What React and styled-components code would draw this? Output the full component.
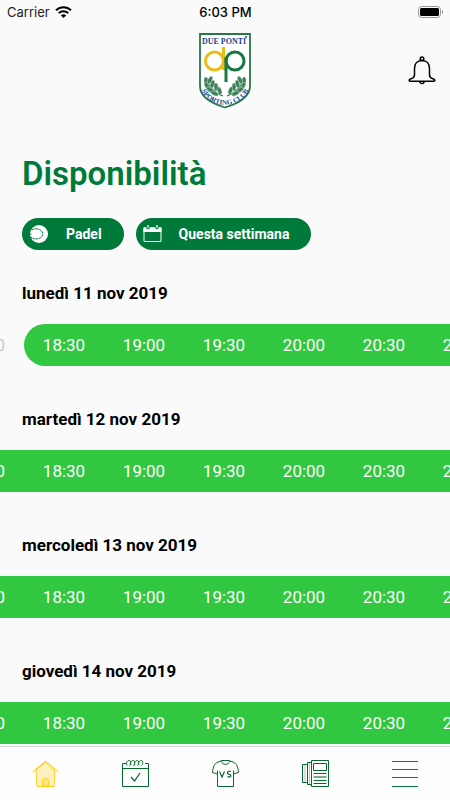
import React from "react";
import styled, { createGlobalStyle, css } from "styled-components";

const GlobalStyle = createGlobalStyle`
  *, *::before, *::after { box-sizing: border-box; }
  body {
    margin: 0;
    background: #fafafa;
    color: #000;
    font-family: Roboto, "Liberation Sans", sans-serif;
  }
  button { font: inherit; border: 0; padding: 0; cursor: pointer; }
`;

const Screen = styled.div`
  display: flex;
  flex-direction: column;
  height: 100vh;
  overflow: hidden;
`;

const StatusBar = styled.div`
  display: grid;
  grid-template-columns: 1fr auto 1fr;
  align-items: center;
  flex: none;
  height: 24px;
  padding: 0 6px 0 7px;
  font-family: Inter, "Liberation Sans", sans-serif;
  font-size: 13px;
`;

const Carrier = styled.span`
  display: flex;
  align-items: center;
  gap: 5px;
  color: #222;
`;

const Clock = styled.time`
  font-weight: 500;
`;

const BatteryIcon = styled.svg`
  justify-self: end;
`;

const Header = styled.header`
  display: grid;
  grid-template-columns: 1fr auto 1fr;
  flex: none;
  height: 126px;
  padding: 8px 14px 0;
`;

const Crest = styled.svg`
  grid-column: 2;
  display: block;
`;

const BellButton = styled.button`
  justify-self: end;
  align-self: start;
  margin-top: 24px;
  background: none;
  svg { display: block; }
`;

const Content = styled.main`
  flex: 1;
  min-height: 0;
  overflow-y: auto;
  overflow-x: hidden;
  scrollbar-width: none;
`;

const Title = styled.h1`
  margin: 0;
  padding: 0 22px;
  color: #007a3b;
  font-size: 33px;
  line-height: 48px;
  font-weight: 600;
`;

const Filters = styled.div`
  display: flex;
  gap: 12px;
  padding: 20px 22px 30px;
`;

const FilterButton = styled.button`
  display: flex;
  align-items: center;
  gap: 17px;
  height: 32px;
  padding: 0 22px 0 7px;
  border-radius: 16px;
  background: #007a3b;
  color: #fff;
  font-size: 14px;
  font-weight: 700;
  svg { display: block; }
`;

const Day = styled.section`
  padding-bottom: 40px;
`;

const DayTitle = styled.h2`
  margin: 0;
  padding: 0 22px 18px;
  font-size: 17px;
  line-height: 26px;
  font-weight: 700;
`;

const SlotTrack = styled.div`
  display: flex;
  margin-left: -56px;
  overflow: hidden;
`;

const Slot = styled.button`
  flex: none;
  width: 80px;
  height: 42px;
  font-size: 17px;
  color: #fff;
  background: #31c741;
  ${({ $first }) => $first && css`border-radius: 21px 0 0 21px;`}
  &:disabled {
    color: #bfcecb;
    background: transparent;
    cursor: default;
  }
`;

const TabBar = styled.nav`
  display: grid;
  grid-template-columns: repeat(5, 1fr);
  flex: none;
  height: 54px;
  border-top: 1px solid #d9d9d9;
  background: #fdfdfd;
`;

const Tab = styled.a`
  display: flex;
  align-items: center;
  justify-content: center;
  color: ${({ $active }) => ($active ? "#fccf1c" : "#08692c")};
  svg { display: block; }
`;

const WifiIcon = () => (
  <svg width="17" height="12" viewBox="0 0 17 12" fill="none" stroke="#000" strokeWidth="2" aria-hidden="true">
    <path d="M1 4.3C5.2.1 11.8.1 16 4.3M3.7 7.1c2.7-2.6 6.9-2.6 9.6 0" />
    <path d="M8.5 12 5.9 9.4c1.4-1.4 3.8-1.4 5.2 0z" fill="#000" stroke="none" />
  </svg>
);

const leaves = [
  [7, 49, -5], [8, 54, -30], [11, 58, -50], [15.5, 61.5, -65],
  [11, 48, 25], [13.5, 52, 15], [17, 55, 0], [20.5, 58.5, -20],
];

const Laurel = () => (
  <g>
    <path d="M8 46c1 8 6 14 16 18" stroke="#236f41" strokeWidth="1.2" fill="none" />
    {leaves.map(([x, y, r]) => (
      <ellipse key={`${x}-${y}`} cx={x} cy={y} rx="2" ry="4" transform={`rotate(${r} ${x} ${y})`} fill="#3b8057" stroke="#d5e4d9" strokeWidth=".4" />
    ))}
  </g>
);

const ClubCrest = () => (
  <Crest width="52" height="77" viewBox="0 0 52 77" role="img" aria-label="Due Ponti Sporting Club">
    <path d="M1 2h50v52c0 10-10 17-25 21.5C11 71 1 64 1 54z" fill="#fff" stroke="#267847" strokeWidth="1.8" />
    <text x="25" y="12" textAnchor="middle" fontFamily="Liberation Serif, serif" fontWeight="700" fontSize="8" fill="#18468e">DUE PONTI</text>
    <circle cx="47" cy="5" r="1" fill="#18468e" />
    <g fill="none" strokeWidth="3">
      <circle cx="15.5" cy="29" r="9" stroke="#e7bd16" />
      <path d="M24.500 15v23" stroke="#e7bd16" />
      <circle cx="36" cy="29" r="9" stroke="#187842" />
      <path d="M27 25v25" stroke="#187842" />
    </g>
    <Laurel />
    <g transform="translate(52 0) scale(-1 1)"><Laurel /></g>
    <path id="crest-arc" d="M3 60C13 77 39 77 49 60" fill="none" />
    <text fontFamily="Liberation Serif, serif" fontWeight="700" fontSize="7" fill="#18468e">
      <textPath href="#crest-arc" startOffset="50%" textAnchor="middle">SPORTING CLUB</textPath>
    </text>
  </Crest>
);

const BellIcon = () => (
  <svg width="28" height="29" viewBox="0 0 28 29" fill="none" stroke="#000" strokeWidth="1.5" aria-hidden="true">
    <circle cx="14" cy="2.8" r="1.8" />
    <path d="M14 4.5c-5 0-7.5 3.6-7.5 8v6.3c0 2.3-1 3.3-3.4 3.9-1.4.4-2 .8-2 1.6 0 .6.4.9 1 .9h23.8c.6 0 1-.3 1-.9 0-.8-.6-1.2-2-1.6-2.4-.6-3.4-1.6-3.4-3.9v-6.3c0-4.4-2.5-8-7.5-8z" />
    <path d="M11.8 25.5c.3 2.8 4.1 2.8 4.4 0" />
  </svg>
);

const BallIcon = () => (
  <svg width="20" height="18" viewBox="0 0 20 18" aria-hidden="true">
    <circle cx="10" cy="9" r="9" fill="#fff" />
    <path d="M2.500 5c3-1.500 6-1.500 8-.5 3 1.500 4 4 2.800 6.300C11.500 13.800 8 14.500 4 13.500" fill="none" stroke="#007a3b" strokeDasharray="3 .5" />
    <path d="M0 9h2.500M.5 12.500h3" stroke="#007a3b" />
  </svg>
);

const CalendarIcon = () => (
  <svg width="19" height="18" viewBox="0 0 19 18" aria-hidden="true">
    <path d="M1 3h17v13.5H1z" fill="none" stroke="#fff" />
    <path d="M.5 2.5h18V7H.5z" fill="#fff" />
    <path d="M5 0v4M14 0v4" stroke="#007a3b" strokeWidth="3" />
    <path d="M5 0v3M14 0v3" stroke="#fff" strokeWidth="1.2" />
  </svg>
);

const HomeIcon = () => (
  <svg width="27" height="27" viewBox="0 0 27 27" fill="#fff1bd" stroke="currentColor" aria-hidden="true">
    <path d="M4 10v1l1 15.5h17L23 11 13.5 2z" />
    <path d="M10.5 26V21c0-4 6-4 6 0v5z" fill="#ffe28a" />
    <path d="m.5 12 13-11 13 11" fill="none" />
  </svg>
);

const BookingIcon = () => (
  <svg width="27" height="27" viewBox="0 0 27 27" fill="none" stroke="currentColor" aria-hidden="true">
    <path d="M4 3.5H.5v23h26v-23H23M.5 8.5h26" />
    <path d="M5 5.5C3.5 4 5 .5 7 .5c2.5 0 2 4 .5 5M9 5.5c-1.5-1.5 0-5 2-5 2.5 0 2 4 .5 5M13 5.5c-1.5-1.5 0-5 2-5 2.5 0 2 4 .5 5M17 5.5c-1.5-1.5 0-5 2-5 2.5 0 2 4 .5 5" />
    <path d="m9 17 3.500 4L18 13" strokeWidth="1.300" />
  </svg>
);

const ShirtIcon = () => (
  <svg width="27" height="27" viewBox="0 0 27 27" fill="none" stroke="currentColor" aria-hidden="true">
    <path d="M5.5 13.5v13h16v-13M5.5 14 .5 12.5C1 7 2.5 3.500 5 2.500L10 .5h7l5 2c2.500 1 4 4.500 4.500 10l-5 1.500M5.500 14v-3.500M21.500 14v-3.500M9 1c1.500 4.500 7.500 4.500 9 0" />
    <path d="m7.500 11.500 2.500 5.500 2.500-5.500M19 11.500c-4-1-4.500 2-2 2.700 3 .8 2 3.500-1.500 2.500" strokeWidth="1.200" />
  </svg>
);

const NewsIcon = () => (
  <svg width="27" height="27" viewBox="0 0 27 27" fill="none" stroke="currentColor" aria-hidden="true">
    <path d="M9.5.5h17v26h-17zM9.5 2.5h-4v22h4M5.5 4.5h-5v18h5" />
    <path d="M7.5 3v21M3 5v17" stroke="#a9c9b2" />
    <path d="M11.5 3.5h13v7h-13zM11.5 13.5h13M11.5 20.5h13M11.5 23.5h13" />
    <path d="M11.5 17h13" stroke="#7ba98a" strokeWidth="2" />
  </svg>
);

const MenuIcon = () => (
  <svg width="26" height="27" viewBox="0 0 26 27" stroke="#087842" aria-hidden="true">
    <path d="M0 1.5h26M0 9.5h26M0 17.5h26M0 26.5h26" />
  </svg>
);

const times = ["18:00", "18:30", "19:00", "19:30", "20:00", "20:30", "21:00"];
const days = [
  { label: "lunedì 11 nov 2019", firstFree: 1 },
  { label: "martedì 12 nov 2019", firstFree: 0 },
  { label: "mercoledì 13 nov 2019", firstFree: 0 },
  { label: "giovedì 14 nov 2019", firstFree: 0 },
];
const tabs = [
  { label: "Home", Icon: HomeIcon },
  { label: "Prenotazioni", Icon: BookingIcon },
  { label: "Partite", Icon: ShirtIcon },
  { label: "Notizie", Icon: NewsIcon },
  { label: "Menu", Icon: MenuIcon },
];

export default function App() {
  return (
    <Screen>
      <GlobalStyle />
      <StatusBar>
        <Carrier>Carrier <WifiIcon /></Carrier>
        <Clock>6:03 PM</Clock>
        <BatteryIcon width="26" height="13" viewBox="0 0 26 13" aria-hidden="true">
          <rect x=".5" y=".5" width="22" height="11" rx="3" fill="none" stroke="#999" />
          <rect x="2" y="2" width="19" height="8" rx="1.5" />
          <path d="M24 4v4c1.5-.5 1.5-3.5 0-4z" fill="#888" />
        </BatteryIcon>
      </StatusBar>
      <Header>
        <ClubCrest />
        <BellButton aria-label="Notifiche"><BellIcon /></BellButton>
      </Header>
      <Content>
        <Title>Disponibilità</Title>
        <Filters>
          <FilterButton><BallIcon />Padel</FilterButton>
          <FilterButton><CalendarIcon />Questa settimana</FilterButton>
        </Filters>
        {days.map(({ label, firstFree }) => (
          <Day key={label}>
            <DayTitle>{label}</DayTitle>
            <SlotTrack>
              {times.map((time, i) => (
                <Slot key={time} disabled={i < firstFree} $first={firstFree > 0 && i === firstFree}>{time}</Slot>
              ))}
            </SlotTrack>
          </Day>
        ))}
      </Content>
      <TabBar aria-label="Navigazione principale">
        {tabs.map(({ label, Icon }, i) => (
          <Tab key={label} href="#" aria-label={label} $active={i === 0}><Icon /></Tab>
        ))}
      </TabBar>
    </Screen>
  );
}
